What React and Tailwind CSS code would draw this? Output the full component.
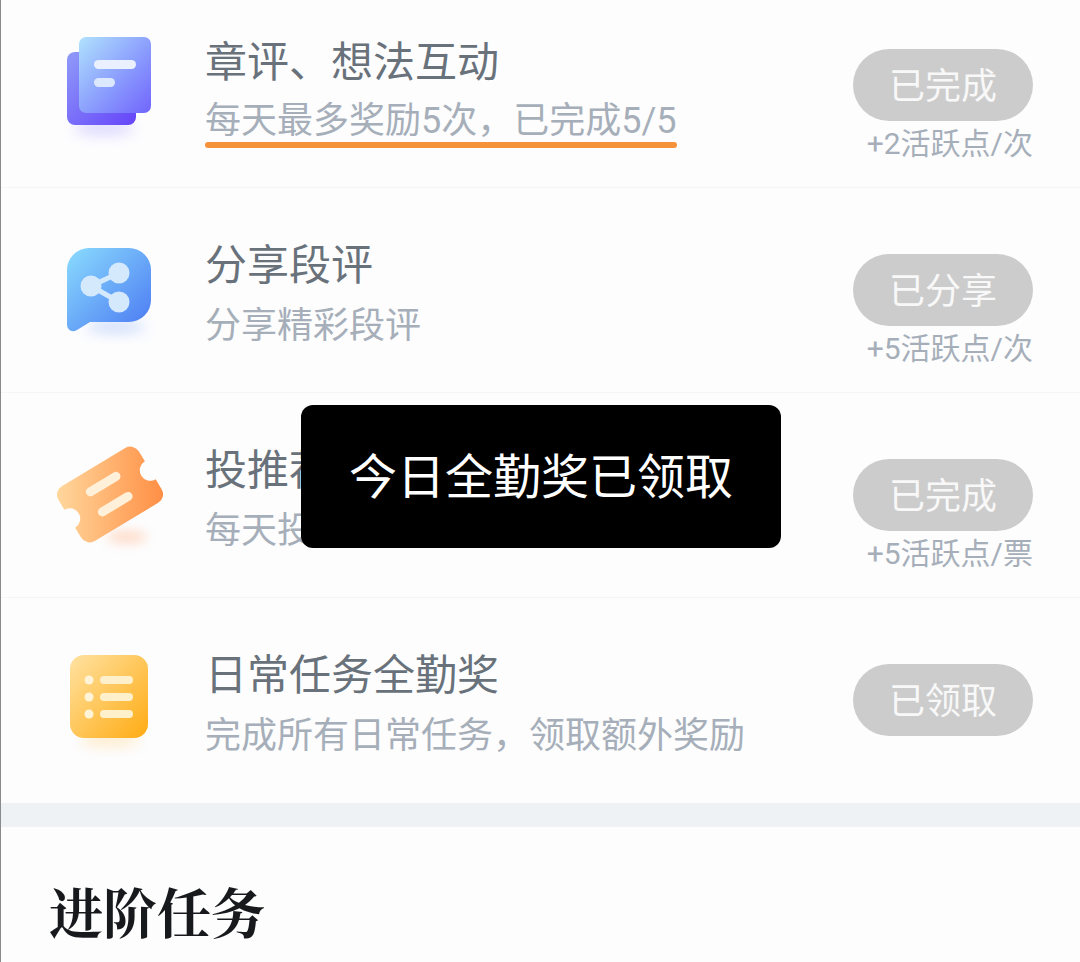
const sans = "font-['Roboto','Noto_Sans_CJK_SC',sans-serif]"

const IconFiles = () => (
  <svg width="130" height="130" viewBox="0 0 130 130">
    <defs>
      <linearGradient id="fa" x1="0" y1="0" x2="1" y2="1">
        <stop offset="0" stopColor="#8f9bf8" />
        <stop offset="1" stopColor="#6543fa" />
      </linearGradient>
      <linearGradient id="fb" x1="0" y1="0" x2="1" y2="1">
        <stop offset="0" stopColor="#b0e2fd" />
        <stop offset="0.55" stopColor="#8a9cfd" />
        <stop offset="1" stopColor="#7165fd" />
      </linearGradient>
      <filter id="fs" x="-50%" y="-100%" width="200%" height="300%">
        <feGaussianBlur stdDeviation="7" />
      </filter>
    </defs>
    <ellipse cx="64" cy="100" rx="30" ry="7" fill="#8b7bfb" opacity="0.3" filter="url(#fs)" />
    <rect x="27" y="24" width="69" height="73" rx="8" fill="url(#fa)" />
    <rect x="39" y="9" width="72" height="76" rx="7" fill="url(#fb)" />
    <rect x="54" y="32" width="42" height="9" rx="4.5" fill="#eaf0fe" />
    <rect x="54" y="50" width="21" height="9" rx="4.5" fill="#dce8fe" />
  </svg>
)

const IconShare = () => (
  <svg width="130" height="130" viewBox="0 0 130 130">
    <defs>
      <linearGradient id="sa" x1="0" y1="0" x2="1" y2="1">
        <stop offset="0" stopColor="#8adcfe" />
        <stop offset="1" stopColor="#4a78f2" />
      </linearGradient>
      <filter id="ss" x="-50%" y="-100%" width="200%" height="300%">
        <feGaussianBlur stdDeviation="7" />
      </filter>
    </defs>
    <ellipse cx="76" cy="94" rx="30" ry="6" fill="#6f9cf5" opacity="0.35" filter="url(#ss)" />
    <path
      d="M49 15H89A22 22 0 0 1 111 37V67A22 22 0 0 1 89 89H50L37 97C32 100 27 97 27 91V37A22 22 0 0 1 49 15Z"
      fill="url(#sa)"
    />
    <path d="M79 40L51 53L79 69" fill="none" stroke="#d5e9fc" strokeWidth="5" />
    <circle cx="51" cy="53" r="10.5" fill="#d5e9fc" />
    <circle cx="79" cy="40" r="10.5" fill="#d5e9fc" />
    <circle cx="79" cy="69" r="10.5" fill="#d5e9fc" />
  </svg>
)

const IconTicket = () => (
  <svg width="130" height="130" viewBox="0 0 130 130">
    <defs>
      <linearGradient
        id="ta"
        gradientUnits="userSpaceOnUse"
        x1="17"
        y1="56"
        x2="123"
        y2="56"
        gradientTransform="rotate(31 70 56.5)"
      >
        <stop offset="0" stopColor="#ffd79c" />
        <stop offset="1" stopColor="#ff8f45" />
      </linearGradient>
      <filter id="ts" x="-60%" y="-100%" width="220%" height="300%">
        <feGaussianBlur stdDeviation="6" />
      </filter>
    </defs>
    <ellipse cx="87" cy="99" rx="20" ry="6" fill="#ffab7c" opacity="0.45" filter="url(#ts)" />
    <g transform="rotate(-31 70 56.5)">
      <path
        d="M33 24.5H107A10 10 0 0 1 117 34.5V46A10.5 10.5 0 0 0 117 67V78.5A10 10 0 0 1 107 88.5H33A10 10 0 0 1 23 78.5V67A10.5 10.5 0 0 0 23 46V34.5A10 10 0 0 1 33 24.5Z"
        fill="url(#ta)"
      />
      <rect x="50" y="39.5" width="39" height="9" rx="4.5" fill="#fff1d9" />
      <rect x="50" y="63" width="39" height="9" rx="4.5" fill="#fff1d9" />
    </g>
  </svg>
)

const IconList = () => (
  <svg width="130" height="130" viewBox="0 0 130 130">
    <defs>
      <linearGradient id="la" x1="0" y1="0" x2="1" y2="1">
        <stop offset="0" stopColor="#ffe2a2" />
        <stop offset="1" stopColor="#ffab12" />
      </linearGradient>
      <filter id="ls" x="-50%" y="-100%" width="200%" height="300%">
        <feGaussianBlur stdDeviation="7" />
      </filter>
    </defs>
    <ellipse cx="70" cy="97" rx="30" ry="6" fill="#ffc454" opacity="0.35" filter="url(#ls)" />
    <rect x="30" y="12" width="78" height="83" rx="14" fill="url(#la)" />
    {[37, 54, 71].map((y) => (
      <g key={y}>
        <circle cx="49" cy={y} r="4.5" fill="#fff4d8" />
        <rect x="60" y={y - 4} width="33" height="8" rx="4" fill="#fff0cc" />
      </g>
    ))}
  </svg>
)

const tasks = [
  {
    icon: <IconFiles />,
    title: "章评、想法互动",
    sub: "每天最多奖励5次，已完成5/5",
    btn: "已完成",
    note: "+2活跃点/次",
    marked: true,
    first: true,
  },
  { icon: <IconShare />, title: "分享段评", sub: "分享精彩段评", btn: "已分享", note: "+5活跃点/次" },
  { icon: <IconTicket />, title: "投推荐票", sub: "每天投推荐票", btn: "已完成", note: "+5活跃点/票" },
  { icon: <IconList />, title: "日常任务全勤奖", sub: "完成所有日常任务，领取额外奖励", btn: "已领取", last: true },
]

const TaskRow = ({ task }) => (
  <div
    className={`flex items-start ${task.first ? "h-[188px]" : "h-[205px]"} ${task.last ? "" : "border-b border-[#f4f5f7]"}`}
  >
    <div className={`w-[204px] shrink-0 pl-[39px] ${task.first ? "pt-[28px]" : "pt-[45px]"}`}>{task.icon}</div>
    <div className={`flex-1 ${task.first ? "pt-[35px]" : "pt-[50px]"}`}>
      <div className="text-[42px] leading-[56px] text-[#69727b]">{task.title}</div>
      <div className={`relative inline-block text-[36px] leading-[56px] text-[#a6afb9] ${task.first ? "mt-[2px]" : "mt-[4px]"}`}>
        {task.sub}
        {task.marked && <div className="absolute left-0 right-0 top-[49px] h-[6px] rounded-full bg-[#f6923a]" />}
      </div>
    </div>
    <div className={`w-[180px] mr-[47px] shrink-0 flex flex-col items-center ${task.first ? "pt-[49px]" : "pt-[66px]"}`}>
      <div className="w-[180px] h-[72px] pt-[4px] rounded-full bg-[#cccccc] flex items-center justify-center text-[36px] text-[#f8f8f8]">
        {task.btn}
      </div>
      {task.note && <div className="self-end mt-[2px] text-[30px] leading-[42px] text-[#a6afb9]">{task.note}</div>}
    </div>
  </div>
)

const App = () => {
  return (
    <div className={`relative w-[1080px] h-[962px] overflow-hidden bg-[#fdfdfe] border-l border-[#8a8a8a] ${sans}`}>
      {tasks.map((t) => (
        <TaskRow key={t.title} task={t} />
      ))}
      <div className="h-[24px] bg-[#eff2f5]" />
      <div className="pl-[48px] pt-[49px] text-[54px] leading-[70px] font-bold text-[#17191c] font-['Noto_Serif_CJK_SC','Noto_Sans_CJK_SC',serif]">
        进阶任务
      </div>
      <div className="absolute left-[300px] top-[405px] w-[480px] h-[143px] pt-[2px] rounded-[12px] bg-black flex items-center justify-center text-[48px] text-white">
        今日全勤奖已领取
      </div>
    </div>
  )
}

export default App
